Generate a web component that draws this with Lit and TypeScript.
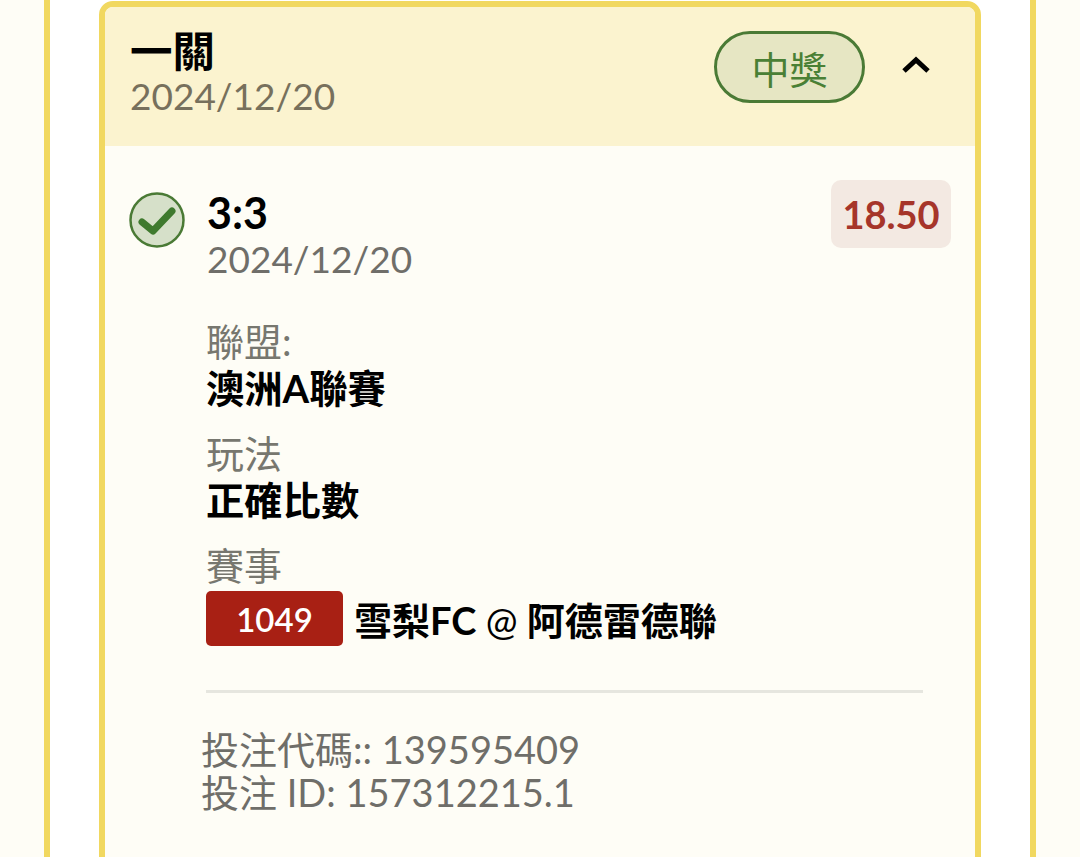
import { LitElement, html, css } from "lit";
import { customElement } from "lit/decorators.js";

@customElement("app-root")
export class AppRoot extends LitElement {
  static styles = css`
    :host {
      display: block;
      height: 857px;
      overflow: hidden;
      background: #fefdf6;
      font-family: Lato, "Noto Sans CJK TC", sans-serif;
      padding: 0 44px;
      box-sizing: border-box;
    }

    .shell {
      height: 857px;
      box-sizing: border-box;
      background: #fff;
      border-left: 6px solid #f1d860;
      border-right: 6px solid #f1d860;
      padding: 1px 49px 0;
    }

    .card {
      height: 900px;
      box-sizing: border-box;
      border: 6px solid #f1d860;
      border-radius: 14px;
      background: #fefdf6;
      overflow: hidden;
    }

    .head {
      height: 139px;
      box-sizing: border-box;
      background: #fbf3cf;
      display: flex;
      align-items: flex-start;
      padding: 20px 45px 0 25px;
    }

    .head-text {
      flex: 1;
    }

    .title {
      font-size: 42.5px;
      font-weight: 700;
      line-height: 48px;
      color: #000;
    }

    .date {
      font-size: 37px;
      line-height: 42px;
      color: #77705c;
    }

    .pill {
      width: 151px;
      height: 72px;
      box-sizing: border-box;
      margin-top: 4px;
      border: 3px solid #4a7a35;
      border-radius: 36px;
      background: #e6e6c3;
      color: #4a8035;
      font-size: 38px;
      display: flex;
      align-items: center;
      justify-content: center;
    }

    .chevron {
      width: 28px;
      height: 20px;
      margin: 28px 0 0 37px;
    }

    .body {
      padding: 34px 24px 0 24px;
    }

    .bet {
      display: flex;
      align-items: flex-start;
    }

    .check {
      width: 56px;
      height: 56px;
      margin-top: 12px;
      flex: none;
    }

    .bet-main {
      flex: 1;
      margin: 8px 0 0 22px;
    }

    .score {
      font-size: 43px;
      font-weight: 700;
      line-height: 49px;
      color: #000;
    }

    .sub {
      font-size: 37px;
      line-height: 43px;
      color: #6f6e69;
    }

    .odds {
      background: #f3e9e2;
      color: #a6352a;
      font-size: 38px;
      font-weight: 700;
      border-radius: 10px;
      width: 120px;
      height: 68px;
      display: flex;
      align-items: center;
      justify-content: center;
    }

    .details {
      margin: 41px 28px 0 77px;
    }

    .row {
      margin-bottom: 21px;
    }

    .label {
      font-size: 38px;
      line-height: 40px;
      margin-bottom: 4px;
      color: #77776f;
    }

    .value {
      font-size: 38.3px;
      font-weight: 700;
      line-height: 47px;
      color: #000;
    }

    .match {
      display: flex;
      align-items: center;
      gap: 11px;
      margin-top: 6px;
      font-size: 38px;
      font-weight: 700;
      color: #000;
    }

    .at {
      font-weight: 400;
    }

    .code {
      width: 137px;
      height: 55px;
      background: #a82014;
      border-radius: 5px;
      color: #fff;
      font-size: 33px;
      font-weight: 600;
      display: flex;
      align-items: center;
      justify-content: center;
    }

    .rule {
      height: 3px;
      background: #e6e6df;
      margin: 44px 0 35px;
    }

    .ids {
      margin-left: -5px;
      font-size: 38px;
      line-height: 43px;
      color: #6f6e69;
    }
  `;

  render() {
    return html`
      <div class="shell">
        <div class="card">
          <div class="head">
            <div class="head-text">
              <div class="title">一關</div>
              <div class="date">2024/12/20</div>
            </div>
            <div class="pill">中獎</div>
            <svg class="chevron" viewBox="0 0 28 20">
              <path d="M2 16 L14 5 L26 16" fill="none" stroke="#000" stroke-width="5" />
            </svg>
          </div>
          <div class="body">
            <div class="bet">
              <svg class="check" viewBox="0 0 56 56">
                <circle cx="28" cy="28" r="26.5" fill="#d6e0c9" stroke="#4a7a35" stroke-width="2.5" />
                <path d="M13 30 L24 39 L43 19" fill="none" stroke="#3f7a2e" stroke-width="7" stroke-linejoin="round" stroke-linecap="round" />
              </svg>
              <div class="bet-main">
                <div class="score">3:3</div>
                <div class="sub">2024/12/20</div>
              </div>
              <div class="odds">18.50</div>
            </div>
            <div class="details">
              <div class="row">
                <div class="label">聯盟:</div>
                <div class="value">澳洲A聯賽</div>
              </div>
              <div class="row">
                <div class="label">玩法</div>
                <div class="value">正確比數</div>
              </div>
              <div class="label">賽事</div>
              <div class="match">
                <span class="code">1049</span>
                <span>雪梨FC <span class="at">@</span> 阿德雷德聯</span>
              </div>
              <div class="rule"></div>
              <div class="ids">
                <div>投注代碼:: 139595409</div>
                <div>投注 ID: 157312215.1</div>
              </div>
            </div>
          </div>
        </div>
      </div>
    `;
  }
}
